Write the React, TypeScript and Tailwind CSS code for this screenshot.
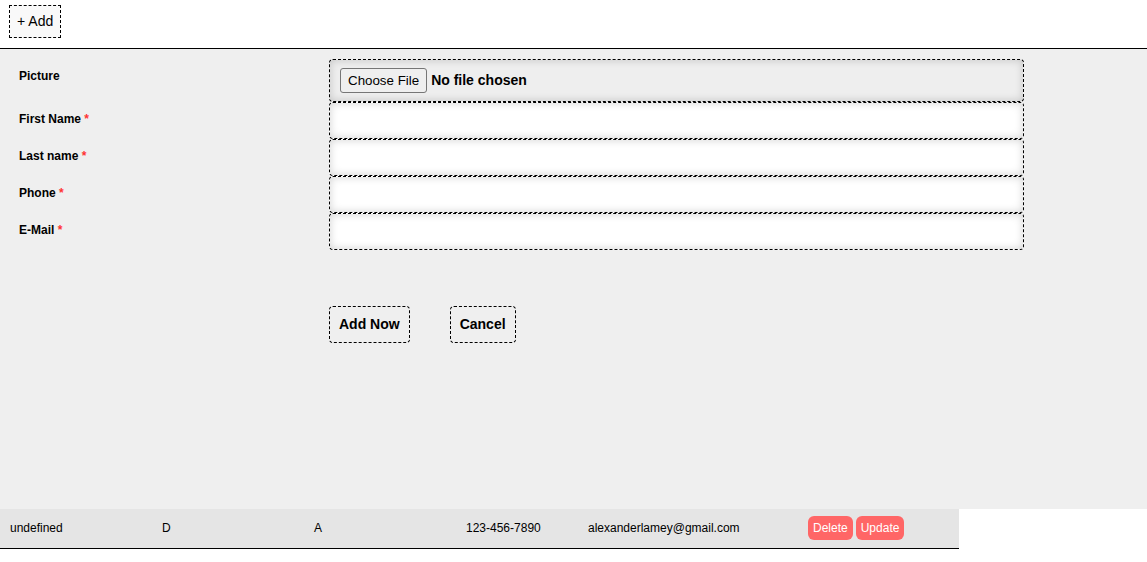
const rows = [
  { label: "First Name", required: true },
  { label: "Last name", required: true },
  { label: "Phone", required: true },
  { label: "E-Mail", required: true },
];

const contacts = [
  {
    id: 1,
    picture: "undefined",
    firstname: "D",
    lastname: "A",
    phone: "123-456-7890",
    email: "alexanderlamey@gmail.com",
  },
];

export default function App() {
  return (
    <div className="min-h-[562px] bg-white font-['Liberation_Sans',Arial,sans-serif] text-black">
      <div className="h-[49px] pl-[9px] pt-[5px] border-b border-black">
        <button className="h-[33px] px-[7px] border border-dashed border-black bg-[#f9f9f9] text-[14px]">
          + Add
        </button>
      </div>

      <div className="bg-[#efefef] h-[460px] pt-[10px]">
        <div className="flex">
          <div className="w-[329px] pl-[19px] pt-[10px] text-[12px] leading-[14px] font-bold">
            Picture
          </div>
          <div className="w-[695px] h-[43px] flex items-center px-[10px] border border-dashed border-black rounded-[4px] bg-[#eeeeee] shadow-[inset_0_0_8px_rgba(0,0,0,0.18)]">
            <input
              type="file"
              className="text-[14px] font-bold file:font-normal file:text-[13.33px] file:border file:border-[#767676] file:rounded-[3px] file:bg-[#efefef] file:px-[7px] file:py-[2px] file:mr-[4px]"
            />
          </div>
        </div>

        {rows.map((row) => (
          <div className="flex" key={row.label}>
            <div className="w-[329px] pl-[19px] pt-[10px] text-[12px] leading-[14px] font-bold">
              {row.label}
              {row.required && <span className="text-[#ff3333]"> *</span>}
            </div>
            <input
              type="text"
              className="w-[695px] h-[37px] border border-dashed border-black rounded-[4px] bg-white shadow-[inset_0_0_8px_rgba(0,0,0,0.18)] outline-none"
            />
          </div>
        ))}

        <div className="flex gap-[40px] pl-[329px] mt-[56px]">
          <button className="h-[37px] px-[9px] border border-dashed border-black rounded-[4px] text-[14px] font-bold">
            Add Now
          </button>
          <button className="h-[37px] px-[9px] border border-dashed border-black rounded-[4px] text-[14px] font-bold">
            Cancel
          </button>
        </div>
      </div>

      <table className="w-[959px] border-b border-black text-[12px]">
        <tbody>
          {contacts.map((c) => (
            <tr key={c.id} className="h-[39px] bg-[#e5e5e5]">
              <td className="w-[152px] pl-[10px]">{c.picture}</td>
              <td className="w-[152px] pl-[10px]">{c.firstname}</td>
              <td className="w-[152px] pl-[10px]">{c.lastname}</td>
              <td className="w-[122px] pl-[10px]">{c.phone}</td>
              <td className="w-[220px] pl-[10px]">{c.email}</td>
              <td className="pl-[10px]">
                <div className="flex gap-[3px]">
                  <button className="h-[24px] px-[5px] rounded-[6px] bg-[#ff6666] text-white">
                    Delete
                  </button>
                  <button className="h-[24px] px-[5px] rounded-[6px] bg-[#ff6666] text-white">
                    Update
                  </button>
                </div>
              </td>
            </tr>
          ))}
        </tbody>
      </table>
    </div>
  );
}
